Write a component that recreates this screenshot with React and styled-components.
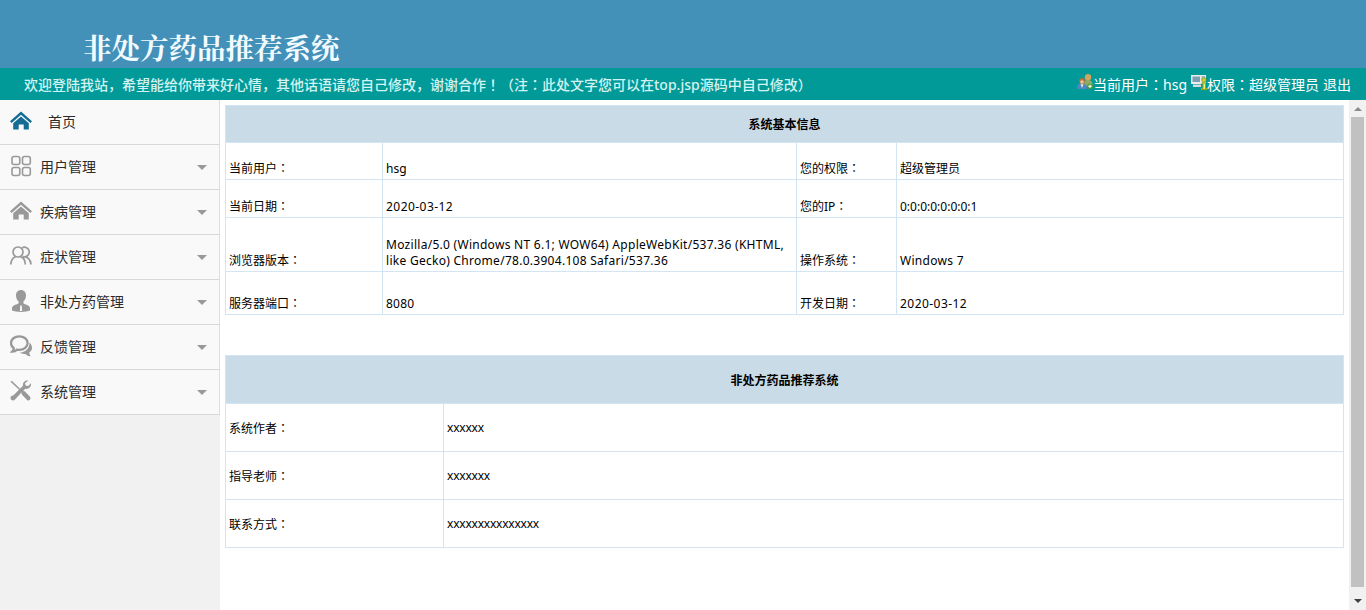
import React from "react";
import styled, { createGlobalStyle } from "styled-components";

const GlobalStyle = createGlobalStyle`
  * {
    box-sizing: border-box;
  }

  body {
    margin: 0;
    overflow: hidden;
    background: #fff;
    color: #000;
    font-family: "Noto Sans", "Noto Sans CJK SC", sans-serif;
    font-size: 12px;
  }
`;

const Page = styled.div`
  display: flex;
  flex-direction: column;
  height: 610px;
`;

const Header = styled.header`
  height: 68px;
  flex: none;
  padding: 27px 0 0 83px;
  background: #4390b9;
`;

const Title = styled.h1`
  margin: 0;
  color: #f2fbff;
  font-family: "Noto Serif CJK SC", "Noto Sans CJK SC", serif;
  font-size: 28.5px;
  line-height: 40px;
  font-weight: 700;
  white-space: nowrap;
`;

const Bar = styled.div`
  display: flex;
  flex: none;
  justify-content: space-between;
  height: 32px;
  padding: 0 15px 0 24px;
  background: #029999;
  font-size: 14px;
  line-height: 33px;
  white-space: nowrap;
`;

const Welcome = styled.span`
  color: #d2f3f1;
  font-weight: 500;
`;

const Account = styled.div`
  display: flex;
  align-items: center;
  color: #fff;
`;

const AccountItem = styled.span`
  display: flex;
  align-items: center;
  margin-right: 4px;

  svg {
    margin-bottom: 5px;
  }
`;

/* full-width punctuation sits in the middle of its cell */
const Punctuation = styled.span`
  font-family: "Noto Sans CJK TC", sans-serif;
`;

const Body = styled.div`
  display: flex;
  flex: 1;
  min-height: 0;
`;

const Sidebar = styled.nav`
  width: 220px;
  flex: none;
  background: #f1f1f1;
`;

const MenuItem = styled.a`
  display: flex;
  align-items: center;
  height: 45px;
  padding: 0 12px 1px 10px;
  border-right: 1px solid #ddd;
  border-bottom: 1px solid #d8d8d8;
  background: #f9f9f9;
  color: ${(props) => (props.$active ? "#136c94" : "#999")};

  svg {
    margin-bottom: 1px;
  }
`;

const MenuLabel = styled.span`
  flex: 1;
  margin-left: ${(props) => (props.$active ? "16px" : "8px")};
  color: #2b2b2b;
  font-size: 14px;
  line-height: 20px;
`;

const Caret = styled.i`
  margin-top: 2px;
  border: 5px solid transparent;
  border-top-color: #999;
  border-bottom: 0;
`;

const Main = styled.main`
  flex: 1;
  padding: 5px 5px 0;
`;

const Table = styled.div`
  display: grid;
  width: 1119px;
  grid-template-columns: ${(props) => props.$columns};
  grid-template-rows: ${(props) => props.$rows};
  margin-bottom: 40px;
  border: 1px solid #d3e5f2;
  border-width: 1px 0 0 1px;
`;

const Cell = styled.div`
  display: flex;
  align-items: ${(props) => (props.$middle ? "center" : "flex-end")};
  padding: ${(props) => (props.$middle ? "1px 3px 0" : "0 3px 2px")};
  border: 1px solid #d3e5f2;
  border-width: 0 1px 1px 0;
  line-height: 16px;
  letter-spacing: ${(props) => props.$spacing || "normal"};
`;

const TableHead = styled(Cell)`
  grid-column: 1 / -1;
  align-items: center;
  justify-content: center;
  padding: 2px 0 0;
  background: #cadbe8;
  font-weight: bold;
`;

const Scrollbar = styled.div`
  display: flex;
  flex-direction: column;
  align-items: center;
  width: 17px;
  padding-top: 7px;
  background: #f1f1f1;
`;

const Thumb = styled.div`
  width: 13px;
  height: 470px;
  margin: 6px 0 12px;
  background: #c1c1c1;
`;

const Arrow = styled.i`
  border: 4px solid transparent;
  ${(props) =>
    props.$up
      ? "border-top: 0; border-bottom-color: #8b8b8b;"
      : "border-bottom: 0; border-top-color: #404040;"}
`;

const Icon = ({ children }) => (
  <svg width="22" height="22" viewBox="0 0 22 22" fill="currentColor">
    {children}
  </svg>
);

const HomeIcon = () => (
  <Icon>
    <path d="M0 11.3 11 1.5l11 9.8-1.6 1.7L11 4.8 1.6 13z" />
    <path d="M3.2 13.2 11 6.5l7.8 6.7v6.3h-5.1v-5h-5v5H3.2z" />
  </Icon>
);

const GridIcon = () => (
  <Icon>
    <g fill="none" stroke="currentColor" strokeWidth="1.6">
      <rect x="2" y="1.5" width="7.8" height="8" rx="2" />
      <rect x="12.5" y="1.5" width="7.8" height="8" rx="2" />
      <rect x="2" y="12.5" width="7.8" height="8" rx="2" />
      <rect x="12.5" y="12.5" width="7.8" height="8" rx="2" />
    </g>
  </Icon>
);

const GroupIcon = () => (
  <Icon>
    <g fill="none" stroke="currentColor" strokeWidth="1.7">
      <circle cx="8" cy="7" r="5" />
      <path d="M12 2.7a4.9 4.9 0 1 1 1 9c4.5 0 7.5 2.5 8 7.8M.9 19.5c0-4 1.5-6.5 4.6-7.8M10.5 11.6c3 1 4.8 3.8 4.8 7.9" />
    </g>
  </Icon>
);

const PersonIcon = () => (
  <Icon>
    <path d="M11 0c3.3 0 5.2 2.5 5 5.8-.1 2.6-1.2 4.6-2.6 5.7v1.7c1.2 1.5 6.6 1.4 6.6 5.1v2.2c-4 1.9-14 1.9-18 0v-2.2c0-3.7 5.4-3.6 6.6-5.1v-1.7C7.2 10.4 6.1 8.4 6 5.8 5.8 2.5 7.7 0 11 0z" />
    <path d="m10.2 15.500-.3 5.500h2.200l-.3-5.500z" fill="#f9f9f9" />
  </Icon>
);

const ChatIcon = () => (
  <Icon>
    <path
      d="M9.3 1.3c4.700 0 8.300 2.900 8.300 6.800s-3.600 6.800-8.300 6.800c-.8 0-1.500-.1-2.200-.3-1.300 1.300-2.900 2-4.800 2 1-.9 1.500-2 1.500-3.300C2 12 1 10.200 1 8.100c0-3.900 3.600-6.800 8.300-6.800z"
      fill="none"
      stroke="currentColor"
      strokeWidth="2.300"
    />
    <path d="M19.500 7.500c3.500 3.200 3.200 7.800-.2 10 .1 1.600.5 2.700 1.500 3.700-2.200 0-3.900-.8-5.300-2.300-2.200.3-4.200-.1-5.900-1.300 5.800-.2 10-4 9.900-10.100z" />
  </Icon>
);

const ToolsIcon = () => (
  <Icon>
    <path d="m.5 1.800 1.300-1L10.300 9l2.200 2.200c1.200-.4 2.200-.1 3 .7l4.300 4.500c1.600 1.700.1 4.600-2.500 3.900l-5-5.400c-.8-.8-1-1.800-.6-2.800L9.300 10z" />
    <path d="M18.500.6c-3-1-6.300 1.600-5.500 5.200L3.300 15.500c-1.800-.4-3.300 1.600-2.600 3.200.7 1.900 3.200 2.300 4.300.7L11 13l4.300-4.200c3.600.7 6.300-2.200 5.600-5.600l-2.700 2.700-2.700-.5-.4-2.300z" />
  </Icon>
);

const UserIcon = () => (
  <svg width="16" height="16" viewBox="0 0 16 16">
    <path d="M6 12V9q1-3 5-3t4.500 4v3z" fill="#8dae62" />
    <circle cx="11" cy="3.300" r="3.200" fill="#cfa45c" />
    <path d="M0 15q0-5 3-5.500h4q3 1 3 5.500z" fill="#4f86c6" />
    <circle cx="5" cy="7" r="2.900" fill="#b9713f" />
    <circle cx="5" cy="8" r="1.800" fill="#efc49b" />
    <path d="M3.500 10.300h3L5 14z" fill="#eee4d8" />
    <circle cx="13" cy="12.300" r="2.900" fill="#4a9b3a" />
    <path d="M12.500 10.500h1v1.300h1.300v1h-1.300v1.300h-1v-1.300h-1.300v-1h1.300z" fill="#fff" />
  </svg>
);

const RoleIcon = () => (
  <svg width="16" height="16" viewBox="0 0 16 16">
    <path d="M0 1h15v9H0z" fill="#e9edf0" />
    <path d="M1.500 2.500H9V8H1.500z" fill="#7d9fb4" />
    <path d="M10.500 2.500H14v1h-3.500zM10.500 4.500H12v1h-1.500z" fill="#738087" />
    <path d="M2 10.500h8V13H2z" fill="#d5dce0" />
    <circle cx="13" cy="6" r="2.300" fill="#c7d431" stroke="#6b8515" strokeWidth=".6" />
    <path d="M10.500 8.500H15V14h1v2h-6v-2h1.500v-4h-1z" fill="#8caa1c" />
    <path d="M12.500 9.500H14V15h-1.500z" fill="#f2ef6e" />
  </svg>
);

const menu = [
  { label: "首页", icon: HomeIcon, active: true },
  { label: "用户管理", icon: GridIcon },
  { label: "疾病管理", icon: HomeIcon },
  { label: "症状管理", icon: GroupIcon },
  { label: "非处方药管理", icon: PersonIcon },
  { label: "反馈管理", icon: ChatIcon },
  { label: "系统管理", icon: ToolsIcon },
];

const systemInfo = [
  { text: "当前用户", label: true },
  { text: "hsg" },
  { text: "您的权限", label: true },
  { text: "超级管理员" },
  { text: "当前日期", label: true },
  { text: "2020-03-12", spacing: "0.45px" },
  { text: "您的IP", label: true },
  { text: "0:0:0:0:0:0:0:1" },
  { text: "浏览器版本", label: true },
  {
    text: "Mozilla/5.0 (Windows NT 6.1; WOW64) AppleWebKit/537.36 (KHTML, like Gecko) Chrome/78.0.3904.108 Safari/537.36",
    spacing: "0.28px",
  },
  { text: "操作系统", label: true },
  { text: "Windows 7", spacing: "0.3px" },
  { text: "服务器端口", label: true },
  { text: "8080", spacing: "0.2px" },
  { text: "开发日期", label: true },
  { text: "2020-03-12", spacing: "0.45px" },
];

const authorInfo = [
  { text: "系统作者", label: true },
  { text: "xxxxxx", spacing: "-0.22px" },
  { text: "指导老师", label: true },
  { text: "xxxxxxx", spacing: "-0.22px" },
  { text: "联系方式", label: true },
  { text: "xxxxxxxxxxxxxxx", spacing: "-0.22px" },
];

const InfoTable = ({ title, data, columns, rows, middle }) => (
  <Table $columns={columns} $rows={rows}>
    <TableHead>{title}</TableHead>
    {data.map(({ text, label, spacing }, index) => (
      <Cell key={index} $middle={middle} $spacing={spacing}>
        <span>
          {text}
          {label && <Punctuation>：</Punctuation>}
        </span>
      </Cell>
    ))}
  </Table>
);

const App = () => {
  return (
    <Page>
      <GlobalStyle />
      <Header>
        <Title>非处方药品推荐系统</Title>
      </Header>
      <Bar>
        <Welcome>
          欢迎登陆我站，希望能给你带来好心情，其他话语请您自己修改，谢谢合作
          <Punctuation>！（</Punctuation>注<Punctuation>：</Punctuation>
          此处文字您可以在top.jsp源码中自己修改<Punctuation>）</Punctuation>
        </Welcome>
        <Account>
          <AccountItem>
            <UserIcon />
            <span>
              当前用户<Punctuation>：</Punctuation>hsg
            </span>
          </AccountItem>
          <AccountItem>
            <RoleIcon />
            <span>
              权限<Punctuation>：</Punctuation>超级管理员
            </span>
          </AccountItem>
          <span>退出</span>
        </Account>
      </Bar>
      <Body>
        <Sidebar>
          {menu.map(({ label, icon: MenuIcon, active }) => (
            <MenuItem key={label} $active={active}>
              <MenuIcon />
              <MenuLabel $active={active}>{label}</MenuLabel>
              {!active && <Caret />}
            </MenuItem>
          ))}
        </Sidebar>
        <Main>
          <InfoTable
            title="系统基本信息"
            data={systemInfo}
            columns="157px 414px 100px 447px"
            rows="37px 37px 38px 54px 43px"
          />
          <InfoTable
            title="非处方药品推荐系统"
            data={authorInfo}
            columns="218px 900px"
            rows="repeat(4, 48px)"
            middle
          />
        </Main>
        <Scrollbar>
          <Arrow $up />
          <Thumb />
          <Arrow />
        </Scrollbar>
      </Body>
    </Page>
  );
};

export default App;
